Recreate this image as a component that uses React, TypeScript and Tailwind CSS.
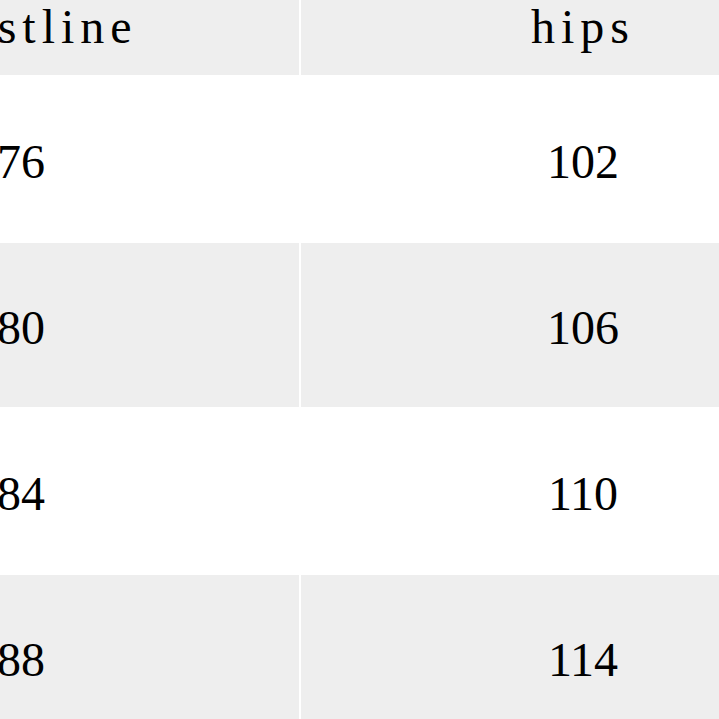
export default function App() {
  const rows = [
    ["76", "102"],
    ["80", "106"],
    ["84", "110"],
    ["88", "114"],
  ];
  return (
    <div className="w-[719px] h-[719px] overflow-hidden bg-white">
      <div className="-ml-[257px] w-[1122px] grid grid-cols-[556px_564px] gap-[2px] text-black">
        <div className="h-[75px] bg-[#eeeeee] flex justify-center pl-[6px] text-[48px] leading-[53px] tracking-[6px] font-['Liberation_Serif',serif]">
          waistline
        </div>
        <div className="h-[75px] bg-[#eeeeee] flex justify-center text-[48px] leading-[53px] tracking-[6px] font-['Liberation_Serif',serif]">
          hips
        </div>
        {rows.map((r, i) => (
          <>
            <div
              key={`a${i}`}
              className={`h-[164px] flex items-center justify-center pt-[5px] text-[48px] font-['Liberation_Serif',serif] ${i % 2 === 0 ? "bg-white" : "bg-[#eeeeee]"}`}
            >
              {r[0]}
            </div>
            <div
              key={`b${i}`}
              className={`h-[164px] flex items-center justify-center pt-[5px] text-[48px] font-['Liberation_Serif',serif] ${i % 2 === 0 ? "bg-white" : "bg-[#eeeeee]"}`}
            >
              {r[1]}
            </div>
          </>
        ))}
      </div>
    </div>
  );
}
